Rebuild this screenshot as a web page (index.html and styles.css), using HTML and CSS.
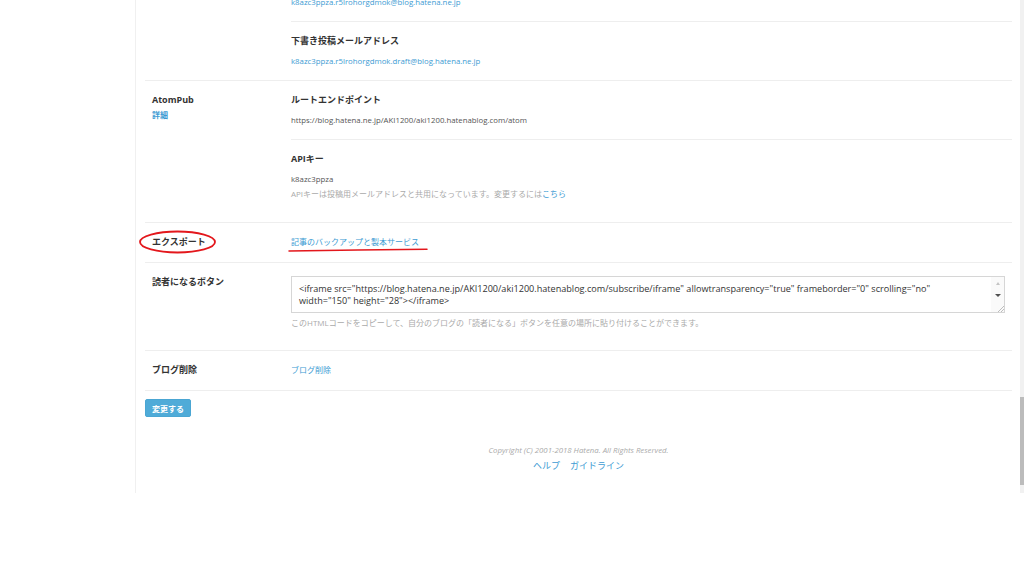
FILE: index.html
```html
<!DOCTYPE html>
<html lang="ja">
<head>
    <meta charset="UTF-8">
    <title>詳細設定 - はてなブログ</title>
    <link rel="stylesheet" href="styles.css">
</head>
<body>
    <div class="window">
        <div class="gutter"></div>
        <main class="content">
            <div class="settings">
                <div class="row">
                    <div class="label"></div>
                    <div class="value">
                        <div class="item">
                            <h3>投稿メールアドレス</h3>
                            <a class="link block" href="#">k8azc3ppza.r5lrohorgdmok@blog.hatena.ne.jp</a>
                        </div>
                        <div class="item">
                            <h3>下書き投稿メールアドレス</h3>
                            <a class="link block" href="#">k8azc3ppza.r5lrohorgdmok.draft@blog.hatena.ne.jp</a>
                        </div>
                    </div>
                </div>

                <div class="row">
                    <div class="label">
                        <h2>AtomPub</h2>
                        <a class="more" href="#">詳細</a>
                    </div>
                    <div class="value">
                        <div class="item">
                            <h3>ルートエンドポイント</h3>
                            <p class="text">https://blog.hatena.ne.jp/AKI1200/aki1200.hatenablog.com/atom</p>
                        </div>
                        <div class="item item-last">
                            <h3>APIキー</h3>
                            <p class="text">k8azc3ppza</p>
                            <p class="note">APIキーは投稿用メールアドレスと共用になっています。変更するには<a class="link" href="#">こちら</a></p>
                        </div>
                    </div>
                </div>

                <div class="row">
                    <div class="label marked">
                        <h2>エクスポート</h2>
                        <svg class="circle" width="80" height="24" viewBox="0 0 80 24">
                            <ellipse cx="39.5" cy="12" rx="37.5" ry="10.5" fill="none" stroke="#e3171c" stroke-width="1.8"/>
                        </svg>
                    </div>
                    <div class="value single marked">
                        <a class="link block" href="#">記事のバックアップと製本サービス</a>
                        <svg class="underline" width="140" height="6" viewBox="0 0 140 6">
                            <path d="M1 4 C 40 3.2, 100 2.6, 139 2.2" fill="none" stroke="#e3171c" stroke-width="1.5" stroke-linecap="round"/>
                        </svg>
                    </div>
                </div>

                <div class="row">
                    <div class="label">
                        <h2>読者になるボタン</h2>
                    </div>
                    <div class="value code-block">
                        <div class="code">
                            <div class="code-text">
                                <span>&lt;iframe src="https://blog.hatena.ne.jp/AKI1200/aki1200.hatenablog.com/subscribe/iframe" allowtransparency="true" frameborder="0" scrolling="no"</span>
                                <span>width="150" height="28"&gt;&lt;/iframe&gt;</span>
                            </div>
                            <div class="code-scroll">
                                <span class="arrow-up"></span>
                                <span class="arrow-down"></span>
                                <span class="grip"></span>
                            </div>
                        </div>
                        <p class="note help">このHTMLコードをコピーして、自分のブログの「読者になる」ボタンを任意の場所に貼り付けることができます。</p>
                    </div>
                </div>

                <div class="row">
                    <div class="label">
                        <h2>ブログ削除</h2>
                    </div>
                    <div class="value single">
                        <a class="link block" href="#">ブログ削除</a>
                    </div>
                </div>
            </div>

            <button class="submit" type="button">変更する</button>

            <footer class="footer">
                <p class="copyright">Copyright (C) 2001-2018 Hatena. All Rights Reserved.</p>
                <p class="footer-links"><a href="#">ヘルプ</a><a href="#">ガイドライン</a></p>
            </footer>
        </main>
        <div class="scrollbar"><div class="thumb"></div></div>
    </div>
</body>
</html>
```

FILE: styles.css
```css
body {
    margin: 0;
    background: #fff;
    font-family: "Open Sans", "Noto Sans CJK JP", sans-serif;
    font-size: 8px;
    line-height: 12px;
    color: #333;
}

a {
    text-decoration: none;
}

p,
h2,
h3 {
    margin: 0;
}

.window {
    display: flex;
    height: 493px;
    overflow: hidden;
}

.gutter {
    width: 135px;
    flex-shrink: 0;
}

.content {
    flex: 1;
    border-left: 1px solid #f0f0f0;
    padding: 0 8px 0 9px;
}

.scrollbar {
    width: 4px;
    background: #f1f1f1;
}

.thumb {
    margin-top: 397px;
    height: 88px;
    background: #bcbcbc;
}

.settings {
    margin-top: -37px;
}

.row {
    display: grid;
    grid-template-columns: 146px 1fr;
    border-bottom: 1px solid #eeeeee;
}

.label {
    padding: 12px 0 0 7px;
}

.label h2 {
    font-size: 9px;
    line-height: 14px;
    font-weight: bold;
    color: #333;
}

.more {
    display: block;
    margin-top: 1px;
    font-size: 8px;
    line-height: 14px;
    font-weight: bold;
    color: #3d9bd3;
}

.item {
    padding: 12px 0 13px;
    border-bottom: 1px solid #eeeeee;
}

.item:last-child {
    border-bottom: none;
}

.item-last {
    padding-bottom: 22px;
}

.item h3 {
    margin-bottom: 7px;
    font-size: 9px;
    line-height: 14px;
    font-weight: bold;
    color: #333;
}

.link {
    font-size: 8px;
    line-height: 12px;
    color: #3d9bd3;
}

.block {
    display: block;
    font-size: 7.8px;
}

.text {
    font-size: 7.8px;
    line-height: 12px;
    color: #555;
}

.note {
    margin-top: 3px;
    font-size: 8px;
    line-height: 12px;
    color: #aaa;
}

.single {
    padding: 12px 0 13px;
    line-height: 14px;
}

.single .link {
    font-size: 8px;
    line-height: 14px;
}

.marked {
    position: relative;
}

.circle {
    position: absolute;
    left: -7px;
    top: 7px;
}

.underline {
    position: absolute;
    left: -3px;
    top: 24px;
}

.code-block {
    padding: 13px 7px 21px 0;
}

.code {
    display: flex;
    height: 35px;
    border: 1px solid #d6d6d6;
}

.code-text {
    flex: 1;
    padding: 6px 7px 0;
    font-size: 9.1px;
    line-height: 12px;
    color: #333;
    white-space: nowrap;
    overflow: hidden;
}

.code-text span {
    display: block;
}

.code-scroll {
    width: 13px;
    display: flex;
    flex-direction: column;
    align-items: center;
    background: #fafafa;
}

.arrow-up {
    margin-top: 5px;
    border-left: 2.5px solid transparent;
    border-right: 2.5px solid transparent;
    border-bottom: 3px solid #c4c4c4;
}

.arrow-down {
    margin-top: 9px;
    border-left: 3px solid transparent;
    border-right: 3px solid transparent;
    border-top: 3px solid #505050;
}

.grip {
    margin-top: auto;
    align-self: flex-end;
    width: 6px;
    height: 6px;
    background: linear-gradient(135deg, transparent 45%, #bdbdbd 45%, #bdbdbd 55%, transparent 55%, transparent 70%, #bdbdbd 70%, #bdbdbd 80%, transparent 80%);
}

.help {
    margin-top: 4px;
}

.submit {
    display: block;
    margin-top: 8px;
    width: 46px;
    height: 18px;
    padding: 0;
    border: 1px solid #4aa6d3;
    border-radius: 2px;
    background: #4fabd8;
    color: #fff;
    font-family: "Open Sans", "Noto Sans CJK JP", sans-serif;
    font-size: 8px;
    font-weight: bold;
}

.footer {
    margin-top: 27px;
    text-align: center;
}

.copyright {
    font-size: 7.8px;
    line-height: 12px;
    font-style: italic;
    color: #aaa;
}

.footer-links {
    margin-top: 4px;
    font-size: 9px;
    line-height: 12px;
}

.footer-links a {
    margin: 0 5px;
    color: #3d9bd3;
}
```
